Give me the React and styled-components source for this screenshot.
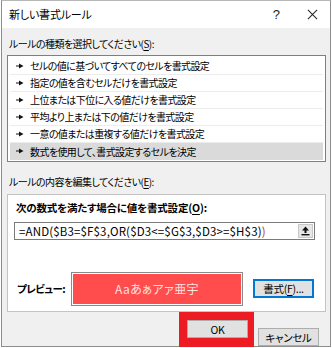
import React from 'react';
import styled, { createGlobalStyle } from 'styled-components';

const GlobalStyle = createGlobalStyle`
  html, body {
    margin: 0;
    padding: 0;
    background: #ffffff;
  }
  body {
    font-family: "Noto Sans CJK JP", "Liberation Sans", sans-serif;
    font-feature-settings: "palt";
    color: #000;
  }
`;

const rules = [
  'セルの値に基づいてすべてのセルを書式設定',
  '指定の値を含むセルだけを書式設定',
  '上位または下位に入る値だけを書式設定',
  '平均より上または下の値だけを書式設定',
  '一意の値または重複する値だけを書式設定',
  '数式を使用して、書式設定するセルを決定',
];

function App() {
  return (
    <>
      <GlobalStyle />
      <Window>
        <TitleBar>
          <Title>新しい書式ルール</Title>
          <TitleButtons>
            <TitleIcon>?</TitleIcon>
            <CloseIcon viewBox="0 0 12 12">
              <path d="M1 1 L11 11 M11 1 L1 11" stroke="#222" strokeWidth="1.1" fill="none" />
            </CloseIcon>
          </TitleButtons>
        </TitleBar>

        <Body>
          <Label>ルールの種類を選択してください(<u>S</u>):</Label>
          <RuleList>
            {rules.map((rule, i) => (
              <RuleRow key={rule} selected={i === rules.length - 1} last={i === rules.length - 1}>
                <Pointer viewBox="0 0 8 6">
                  <path d="M0 2.5 H3 V0.5 L7.5 3 L3 5.5 V3.5 H0 Z" fill="#111" />
                </Pointer>
                {rule}
              </RuleRow>
            ))}
          </RuleList>

          <Label second>ルールの内容を編集してください(<u>E</u>):</Label>
          <EditPanel>
            <BoldLabel>次の数式を満たす場合に値を書式設定(<u>O</u>):</BoldLabel>
            <FormulaBox>
              <FormulaText>
                =AND($B3=$F$3,OR($D3&lt;=$G$3,$D3&gt;=$H$3)<Paren color="#c0392b">)</Paren>
              </FormulaText>
              <CollapseButton>
                <svg width="9" height="10" viewBox="0 0 9 10">
                  <path d="M4.5 0.5 L8 4.5 H5.5 V7 H3.5 V4.5 H1 Z" fill="#111" />
                  <rect x="0.5" y="8" width="8" height="1.4" fill="#111" />
                </svg>
              </CollapseButton>
            </FormulaBox>

            <PreviewRow>
              <PreviewLabel>プレビュー:</PreviewLabel>
              <PreviewBox>Aaあぁアァ亜宇</PreviewBox>
              <Button focused>書式(<u>F</u>)...</Button>
            </PreviewRow>
          </EditPanel>
        </Body>

        <Footer>
          <Highlight>
            <Button wide>OK</Button>
          </Highlight>
          <Button wide>キャンセル</Button>
        </Footer>
      </Window>
    </>
  );
}

export default App;

const Window = styled.div`
  width: 328px;
  height: 345px;
  margin-left: 1px;
  border: 1px solid #8c8c8c;
  border-top-color: #b8b8b8;
  background: #f0f0f0;
  display: flex;
  flex-direction: column;
  overflow: visible;
`;

const TitleBar = styled.div`
  height: 28px;
  background: #ffffff;
  display: flex;
  align-items: center;
  justify-content: space-between;
  padding: 0 12px 0 7px;
`;

const Title = styled.div`
  font-size: 11px;
  letter-spacing: -0.2px;
`;

const TitleButtons = styled.div`
  display: flex;
  align-items: center;
  gap: 27px;
`;

const TitleIcon = styled.span`
  font-family: "Liberation Sans", sans-serif;
  font-size: 13px;
  color: #222;
`;

const CloseIcon = styled.svg`
  width: 11px;
  height: 11px;
`;

const Body = styled.div`
  padding: 0 4px 0 5px;
  display: flex;
  flex-direction: column;
`;

const Label = styled.div`
  font-size: 10px;
  height: 16px;
  line-height: 16px;
  padding-left: 2px;
  margin-top: ${p => (p.second ? '12px' : '8px')};
  margin-bottom: ${p => (p.second ? '4px' : '3px')};
  letter-spacing: -0.55px;

  u {
    text-decoration-thickness: 1px;
    text-underline-offset: 2px;
  }
`;

const RuleList = styled.div`
  background: #ffffff;
  border: 1px solid #7f7f7f;
  box-shadow: inset 0 0 0 1px #ffffff;
  padding: 2px 2px 1px 2px;
  display: flex;
  flex-direction: column;
`;

const RuleRow = styled.div`
  height: 17px;
  display: flex;
  align-items: center;
  gap: 6px;
  padding-left: 6px;
  font-size: 10px;
  letter-spacing: -0.6px;
  background: ${p => (p.selected ? '#dadada' : 'transparent')};
  border-bottom: ${p => (p.last ? 'none' : '1px solid #ececec')};
  box-sizing: border-box;
`;

const Pointer = styled.svg`
  width: 8px;
  height: 6px;
  flex: none;
`;

const EditPanel = styled.div`
  background: #ffffff;
  border: 1px solid #c4c4c4;
  height: 118px;
  padding: 6px 10px 0 6px;
  box-sizing: border-box;
  display: flex;
  flex-direction: column;
`;

const BoldLabel = styled.div`
  font-size: 10.5px;
  font-weight: bold;
  padding-left: 2px;
  line-height: 14px;
  letter-spacing: -0.2px;

  u {
    text-underline-offset: 2px;
  }
`;

const FormulaBox = styled.div`
  margin-top: 7px;
  height: 18px;
  border: 1px solid #7a7a7a;
  background: #ffffff;
  display: flex;
  align-items: center;
  justify-content: space-between;
  padding: 0 1px 0 4px;
  box-sizing: border-box;
`;

const FormulaText = styled.span`
  font-family: "Noto Sans CJK JP", "Liberation Sans", sans-serif;
  font-feature-settings: normal;
  font-size: 11.5px;
  letter-spacing: 0.15px;
`;

const Paren = styled.span`
  color: ${p => p.color};
`;

const CollapseButton = styled.div`
  width: 15px;
  height: 14px;
  background: #e6e6e6;
  border: 1px solid #c8c8c8;
  box-sizing: border-box;
  display: flex;
  align-items: center;
  justify-content: center;
`;

const PreviewRow = styled.div`
  margin-top: 32px;
  display: flex;
  align-items: center;
`;

const PreviewLabel = styled.div`
  font-size: 10.5px;
  font-weight: bold;
  width: 54px;
  padding-left: 3px;
  letter-spacing: -0.6px;
`;

const PreviewBox = styled.div`
  width: 172px;
  height: 34px;
  box-sizing: border-box;
  background: #ff4c4c;
  border: 1px solid #8a8a8a;
  box-shadow: inset 0 0 0 1px #ffffff;
  color: #ffe0e0;
  font-size: 12px;
  letter-spacing: 0.4px;
  display: flex;
  align-items: center;
  justify-content: center;
`;

const Button = styled.div`
  height: ${p => (p.wide ? '18px' : '19px')};
  width: 61px;
  margin-left: ${p => (p.wide ? '0' : '10px')};
  box-sizing: border-box;
  background: #e1e1e1;
  border: 1px solid ${p => (p.focused ? '#0078d7' : '#adadad')};
  box-shadow: ${p => (p.focused ? 'inset 0 0 0 1px #0078d7' : 'none')};
  font-size: 10.5px;
  letter-spacing: -0.3px;
  display: flex;
  align-items: center;
  justify-content: center;

  u {
    text-underline-offset: 2px;
  }
`;

const Footer = styled.div`
  margin-top: auto;
  display: flex;
  align-items: flex-end;
  justify-content: flex-end;
  gap: 4px;
  padding-right: 11px;
  height: 36px;
`;

const Highlight = styled.div`
  background: transparent;
  border: 8px solid #ed1c24;
  border-right-width: 6px;
  border-bottom-width: 11px;
  margin-bottom: -3px;
  position: relative;
`;
